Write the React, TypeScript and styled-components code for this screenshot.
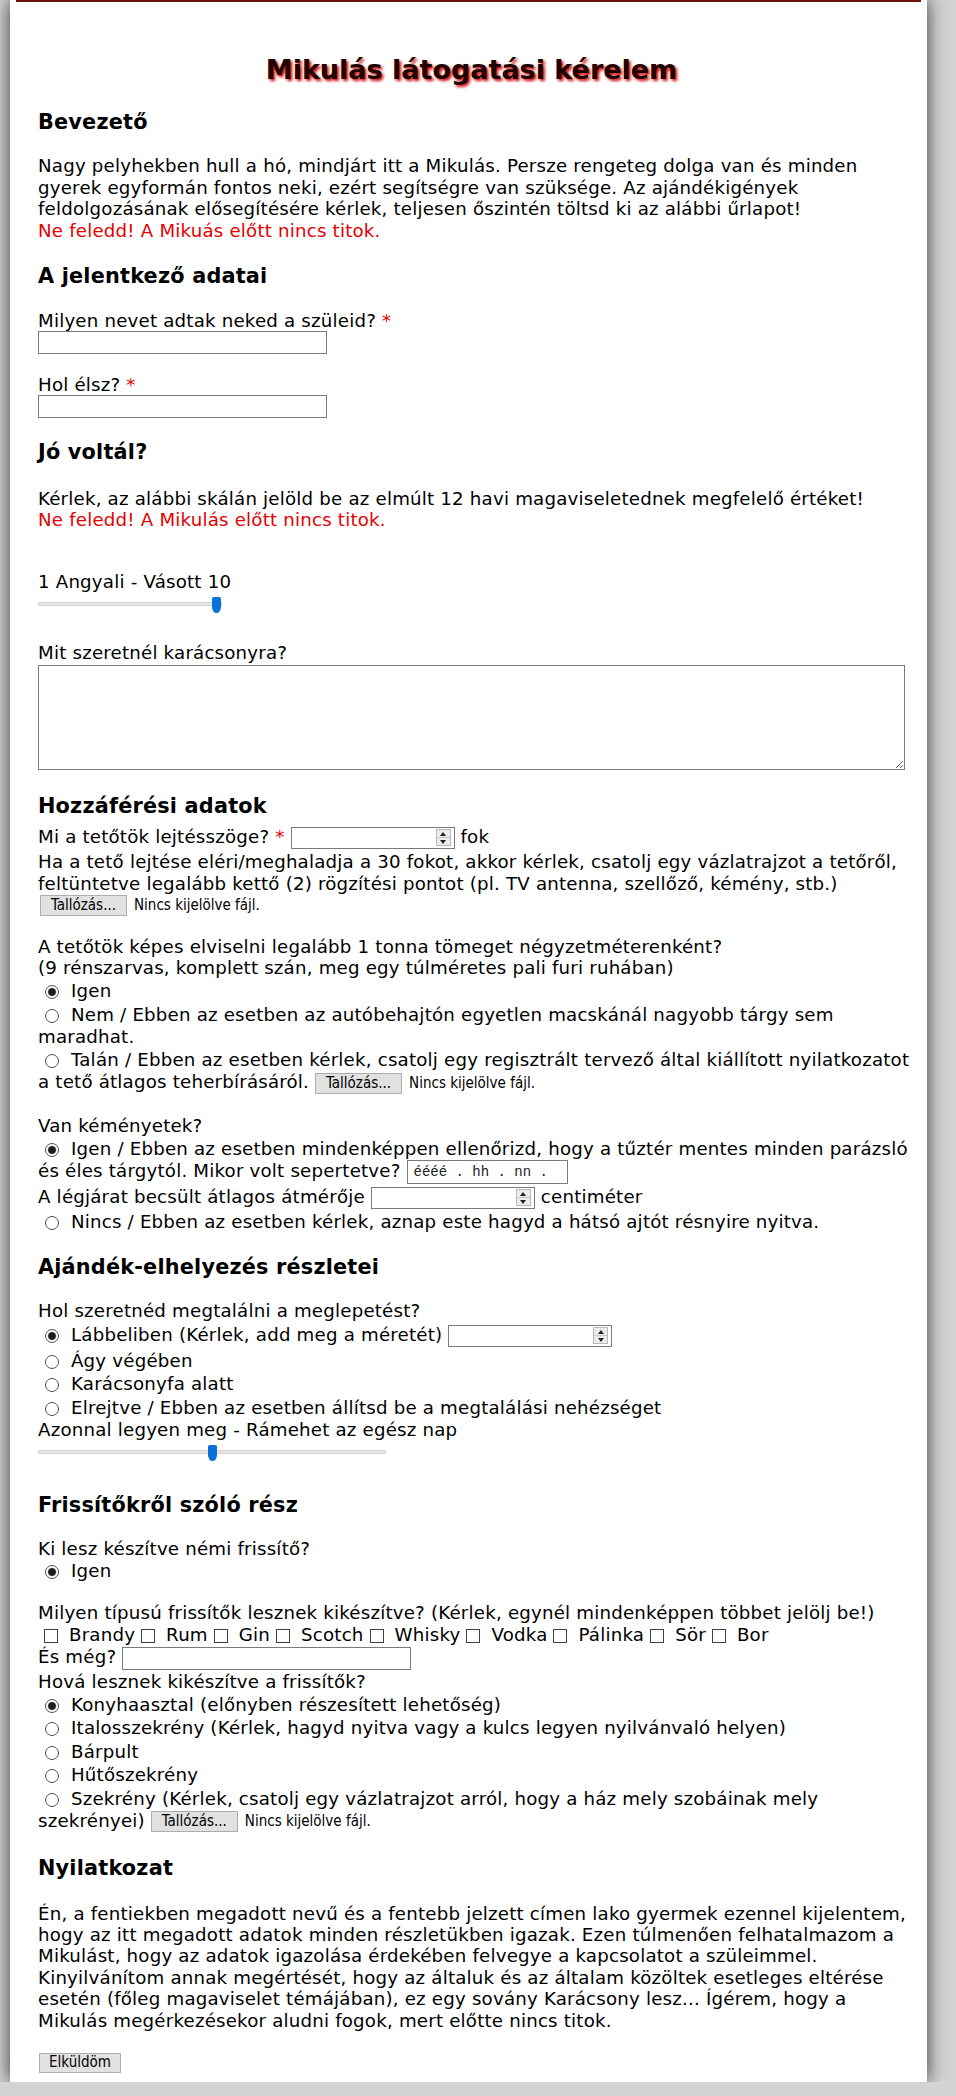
import React from "react";
import styled, { createGlobalStyle } from "styled-components";

const GlobalStyle = createGlobalStyle`
  html, body {
    margin: 0;
    padding: 0;
  }
  body {
    background: #d3d3d3;
    font-family: "DejaVu Sans", Verdana, sans-serif;
    color: #000;
  }
`;

const Sheet = styled.div`
  width: 917px;
  margin-left: 10px;
  padding: 0 6px;
  box-sizing: border-box;
  background: #fff;
  box-shadow: 0 0 18px rgba(0, 0, 0, 0.75);
`;

const Form = styled.form`
  border-top: 2px solid #6d1010;
  padding: 0 16px 9px 22px;
  font-size: 18.2px;
  letter-spacing: 0.2px;
  line-height: 21.4px;
`;

const Title = styled.h1`
  margin: 52px 0 0;
  font-size: 27px;
  line-height: 32px;
  letter-spacing: 0;
  font-weight: bold;
  text-align: center;
  color: #200202;
  text-shadow: 2px 2px 3px #d40000;
`;

const Heading = styled.h2<{ $mt: number }>`
  margin: ${p => p.$mt}px 0 0;
  font-size: 20.8px;
  line-height: 24px;
  font-weight: bold;
`;

// lines are broken where the original form breaks them
const Para = styled.p<{ $mt: number }>`
  margin: ${p => p.$mt}px 0 0;
  white-space: nowrap;
`;

const Note = styled.span`
  color: #e60000;
`;

const Star = styled.span`
  color: #e60000;
`;

const TextBox = styled.input.attrs({ type: "text" })<{ $block?: boolean }>`
  display: ${p => (p.$block ? "block" : "inline-block")};
  width: 289px;
  height: 23px;
  margin: 0;
  padding: 0 3px;
  box-sizing: border-box;
  border: 1px solid #7a7a7a;
  background: #fff;
  vertical-align: middle;
  font: inherit;
  font-size: 14px;
`;

const Range = styled.input.attrs({ type: "range" })<{ $w: number; $mt: number }>`
  -webkit-appearance: none;
  appearance: none;
  display: block;
  width: ${p => p.$w}px;
  height: 16px;
  margin: ${p => p.$mt}px 0 0;
  padding: 0;
  background: transparent;

  &::-webkit-slider-runnable-track {
    height: 4px;
    background: #e7e7e7;
    border: 1px solid #d4d4d4;
    box-sizing: border-box;
  }
  &::-webkit-slider-thumb {
    -webkit-appearance: none;
    width: 9px;
    height: 16px;
    margin-top: -6px;
    background: #0a72d6;
    border-radius: 2px 2px 5px 5px / 2px 2px 7px 7px;
  }
`;

const Area = styled.textarea`
  display: block;
  width: 867px;
  height: 105px;
  margin: 1.2px 0 0;
  box-sizing: border-box;
  border: 1px solid #7a7a7a;
  font: inherit;
  font-size: 14px;
`;

const InputLine = styled.div<{ $mt: number; $lh?: number }>`
  margin-top: ${p => p.$mt}px;
  line-height: ${p => p.$lh ?? 24}px;
  white-space: nowrap;
`;

const NumberBox = styled.span`
  display: inline-flex;
  justify-content: flex-end;
  align-items: center;
  width: 164px;
  height: 22px;
  padding-right: 3px;
  box-sizing: border-box;
  border: 1px solid #7a7a7a;
  background: #fff;
  vertical-align: middle;
  margin: -1px 0;
`;

const Spinner = styled.span`
  display: flex;
  flex-direction: column;
  width: 15px;
  height: 17px;
  border: 1px solid #b9b9b9;
  box-sizing: border-box;
`;

const SpinHalf = styled.span<{ $down?: boolean }>`
  flex: 1;
  display: flex;
  align-items: center;
  justify-content: center;
  background: #ececec;
  border-top: ${p => (p.$down ? "1px solid #c9c9c9" : "none")};

  &::after {
    content: "";
    border-left: 3px solid transparent;
    border-right: 3px solid transparent;
    ${p =>
      p.$down
        ? "border-top: 4px solid #222;"
        : "border-bottom: 4px solid #222;"}
  }
`;

const DateBox = styled.span`
  display: inline-flex;
  align-items: center;
  width: 161px;
  height: 24px;
  padding-left: 6px;
  box-sizing: border-box;
  border: 1px solid #7a7a7a;
  background: #fff;
  vertical-align: middle;
  margin: -2px 0;
  font-family: "Liberation Mono", "DejaVu Sans Mono", monospace;
  font-size: 14px;
  letter-spacing: 0;
  line-height: 1;
  white-space: pre;
  color: #222;
`;

const FilePick = styled.span`
  display: inline-flex;
  align-items: center;
  gap: 7px;
  vertical-align: middle;
  font-family: "DejaVu Sans Condensed", "DejaVu Sans", sans-serif;
  font-size: 15px;
  letter-spacing: 0;
  line-height: 1;
`;

const PlainButton = styled.button<{ $w: number; $h: number }>`
  width: ${p => p.$w}px;
  height: ${p => p.$h}px;
  padding: 0;
  margin: 0;
  background: #e1e1e1;
  border: 1px solid #adadad;
  color: #000;
  font-family: "DejaVu Sans Condensed", "DejaVu Sans", sans-serif;
  font-size: 15px;
  letter-spacing: 0;
  line-height: 1;
`;

const FileLine = styled.div`
  margin-top: 0.7px;
  height: 21px;
  padding-left: 2px;
  display: flex;
`;

const RadioRow = styled.div<{ $mt?: number; $lh?: number }>`
  margin-top: ${p => p.$mt ?? 1.5}px;
  line-height: ${p => p.$lh ?? 22}px;
  white-space: nowrap;
`;

const Radio = styled.input.attrs({ type: "radio" })`
  appearance: none;
  width: 14px;
  height: 14px;
  margin: 0 6px 0 7px;
  box-sizing: border-box;
  border: 1px solid #4d4d4d;
  border-radius: 50%;
  background: #fff;
  vertical-align: middle;

  &:checked {
    background: radial-gradient(circle, #1c1c1c 0 3.4px, #7d7d7d 3.9px, #fff 4.6px);
  }
`;

const Check = styled.input.attrs({ type: "checkbox" })`
  appearance: none;
  width: 14px;
  height: 14px;
  margin: 0 5px 0 6px;
  box-sizing: border-box;
  border: 1px solid #3f3f3f;
  background: #fff;
  vertical-align: middle;
`;

const SubmitLine = styled.div`
  margin-top: 21.7px;
  display: flex;
  padding-left: 1px;
`;

const FileField: React.FC = () => (
  <FilePick>
    <PlainButton type="button" $w={87} $h={21}>
      Tallózás...
    </PlainButton>
    <span>Nincs kijelölve fájl.</span>
  </FilePick>
);

const NumberField: React.FC = () => (
  <NumberBox>
    <Spinner>
      <SpinHalf />
      <SpinHalf $down />
    </Spinner>
  </NumberBox>
);

const drinks = ["Brandy", "Rum", "Gin", "Scotch", "Whisky", "Vodka", "Pálinka", "Sör", "Bor"];

export default function App() {
  return (
    <>
      <GlobalStyle />
      <Sheet>
        <Form onSubmit={e => e.preventDefault()}>
          <Title>Mikulás látogatási kérelem</Title>

          <Heading $mt={24}>Bevezető</Heading>
          <Para $mt={21.3}>
            Nagy pelyhekben hull a hó, mindjárt itt a Mikulás. Persze rengeteg dolga van és minden
            <br />
            gyerek egyformán fontos neki, ezért segítségre van szüksége. Az ajándékigények
            <br />
            feldolgozásának elősegítésére kérlek, teljesen őszintén töltsd ki az alábbi űrlapot!
            <br />
            <Note>Ne feledd! A Mikuás előtt nincs titok.</Note>
          </Para>

          <Heading $mt={23.5}>A jelentkező adatai</Heading>
          <Para $mt={21.3}>
            Milyen nevet adtak neked a szüleid? <Star>*</Star>
          </Para>
          <TextBox $block />
          <Para $mt={19.5}>
            Hol élsz? <Star>*</Star>
          </Para>
          <TextBox $block />

          <Heading $mt={22.2}>Jó voltál?</Heading>
          <Para $mt={23.3}>
            Kérlek, az alábbi skálán jelöld be az elmúlt 12 havi magaviseletednek megfelelő értéket!
            <br />
            <Note>Ne feledd! A Mikulás előtt nincs titok.</Note>
          </Para>
          <Para $mt={41}>1 Angyali - Vásott 10</Para>
          <Range $w={184} $mt={3.2} min={1} max={10} defaultValue={10} />

          <Para $mt={30.3}>Mit szeretnél karácsonyra?</Para>
          <Area />

          <Heading $mt={24}>Hozzáférési adatok</Heading>
          <InputLine $mt={7}>
            Mi a tetőtök lejtésszöge? <Star>*</Star> <NumberField /> fok
          </InputLine>
          <Para $mt={2.3}>
            Ha a tető lejtése eléri/meghaladja a 30 fokot, akkor kérlek, csatolj egy vázlatrajzot a
            tetőről,
            <br />
            feltüntetve legalább kettő (2) rögzítési pontot (pl. TV antenna, szellőző, kémény, stb.)
          </Para>
          <FileLine>
            <FileField />
          </FileLine>

          <Para $mt={20.3}>
            A tetőtök képes elviselni legalább 1 tonna tömeget négyzetméterenként?
            <br />
            (9 rénszarvas, komplett szán, meg egy túlméretes pali furi ruhában)
          </Para>
          <RadioRow $mt={1.7}>
            <Radio name="teher" defaultChecked /> Igen
          </RadioRow>
          <RadioRow>
            <Radio name="teher" /> Nem / Ebben az esetben az autóbehajtón egyetlen macskánál nagyobb
            tárgy sem
            <br />
            maradhat.
          </RadioRow>
          <RadioRow>
            <Radio name="teher" /> Talán / Ebben az esetben kérlek, csatolj egy regisztrált tervező
            által kiállított nyilatkozatot
            <br />a tető átlagos teherbírásáról. <FileField />
          </RadioRow>

          <Para $mt={21.3}>Van kéményetek?</Para>
          <RadioRow $mt={1.2}>
            <Radio name="kemeny" defaultChecked /> Igen / Ebben az esetben mindenképpen ellenőrizd,
            hogy a tűztér mentes minden parázsló
            <br />
            és éles tárgytól. Mikor volt sepertetve? <DateBox>{"éééé . hh . nn ."}</DateBox>
          </RadioRow>
          <InputLine $mt={3}>
            A légjárat becsült átlagos átmérője <NumberField /> centiméter
          </InputLine>
          <RadioRow $mt={2}>
            <Radio name="kemeny" /> Nincs / Ebben az esetben kérlek, aznap este hagyd a hátsó ajtót
            résnyire nyitva.
          </RadioRow>

          <Heading $mt={22}>Ajándék-elhelyezés részletei</Heading>
          <Para $mt={21.3}>Hol szeretnéd megtalálni a meglepetést?</Para>
          <RadioRow $mt={1.2} $lh={24}>
            <Radio name="hely" defaultChecked /> Lábbeliben (Kérlek, add meg a méretét){" "}
            <NumberField />
          </RadioRow>
          <RadioRow $mt={3}>
            <Radio name="hely" /> Ágy végében
          </RadioRow>
          <RadioRow>
            <Radio name="hely" /> Karácsonyfa alatt
          </RadioRow>
          <RadioRow>
            <Radio name="hely" /> Elrejtve / Ebben az esetben állítsd be a megtalálási nehézséget
          </RadioRow>
          <Para $mt={0}>Azonnal legyen meg - Rámehet az egész nap</Para>
          <Range $w={348} $mt={3.5} min={1} max={10} defaultValue={5.5} step={0.5} />

          <Heading $mt={33}>Frissítőkről szóló rész</Heading>
          <Para $mt={21.3}>Ki lesz készítve némi frissítő?</Para>
          <RadioRow $mt={1.2}>
            <Radio name="friss" defaultChecked /> Igen
          </RadioRow>
          <Para $mt={19.3}>
            Milyen típusú frissítők lesznek kikészítve? (Kérlek, egynél mindenképpen többet jelölj
            be!)
          </Para>
          <RadioRow $mt={1.2}>
            {drinks.map(d => (
              <React.Fragment key={d}>
                <Check /> {d}
              </React.Fragment>
            ))}
          </RadioRow>
          <InputLine $mt={0} $lh={22}>
            És még? <TextBox />
          </InputLine>
          <Para $mt={1.3}>Hová lesznek kikészítve a frissítők?</Para>
          <RadioRow $mt={1.2}>
            <Radio name="hova" defaultChecked /> Konyhaasztal (előnyben részesített lehetőség)
          </RadioRow>
          <RadioRow>
            <Radio name="hova" /> Italosszekrény (Kérlek, hagyd nyitva vagy a kulcs legyen
            nyilvánvaló helyen)
          </RadioRow>
          <RadioRow>
            <Radio name="hova" /> Bárpult
          </RadioRow>
          <RadioRow>
            <Radio name="hova" /> Hűtőszekrény
          </RadioRow>
          <RadioRow>
            <Radio name="hova" /> Szekrény (Kérlek, csatolj egy vázlatrajzot arról, hogy a ház mely
            szobáinak mely
            <br />
            szekrényei) <FileField />
          </RadioRow>

          <Heading $mt={24}>Nyilatkozat</Heading>
          <Para $mt={22.3}>
            Én, a fentiekben megadott nevű és a fentebb jelzett címen lako gyermek ezennel
            kijelentem,
            <br />
            hogy az itt megadott adatok minden részletükben igazak. Ezen túlmenően felhatalmazom a
            <br />
            Mikulást, hogy az adatok igazolása érdekében felvegye a kapcsolatot a szüleimmel.
            <br />
            Kinyilvánítom annak megértését, hogy az általuk és az általam közöltek esetleges eltérése
            <br />
            esetén (főleg magaviselet témájában), ez egy sovány Karácsony lesz... Ígérem, hogy a
            <br />
            Mikulás megérkezésekor aludni fogok, mert előtte nincs titok.
          </Para>
          <SubmitLine>
            <PlainButton type="submit" $w={82} $h={20}>
              Elküldöm
            </PlainButton>
          </SubmitLine>
        </Form>
      </Sheet>
    </>
  );
}
